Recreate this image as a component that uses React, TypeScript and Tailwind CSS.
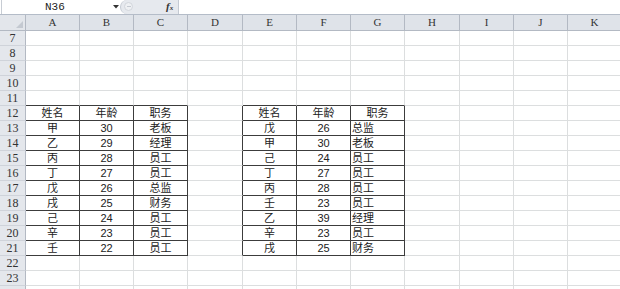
import React from "react";

const COLS = ["A", "B", "C", "D", "E", "F", "G", "H", "I", "J", "K"];
const ROWS = Array.from({ length: 18 }, (_, i) => i + 7);

const left: string[][] = [
  ["姓名", "年龄", "职务"],
  ["甲", "30", "老板"],
  ["乙", "29", "经理"],
  ["丙", "28", "员工"],
  ["丁", "27", "员工"],
  ["戊", "26", "总监"],
  ["戌", "25", "财务"],
  ["己", "24", "员工"],
  ["辛", "23", "员工"],
  ["壬", "22", "员工"],
];

const right: string[][] = [
  ["姓名", "年龄", "职务"],
  ["戊", "26", "总监"],
  ["甲", "30", "老板"],
  ["己", "24", "员工"],
  ["丁", "27", "员工"],
  ["丙", "28", "员工"],
  ["壬", "23", "员工"],
  ["乙", "39", "经理"],
  ["辛", "23", "员工"],
  ["戌", "25", "财务"],
];

function cellText(r: number, c: number): { text: string; align: "center" | "left" } {
  if (r >= 12 && r <= 21) {
    const i = r - 12;
    if (c <= 2) return { text: left[i][c], align: "center" };
    if (c >= 4 && c <= 6) {
      const t = right[i][c - 4];
      const align = c === 6 && r !== 12 ? "left" : "center";
      return { text: t, align };
    }
  }
  return { text: "", align: "center" };
}

export default function App() {
  return (
    <div
      className="w-[620px] h-[289px] overflow-hidden bg-white text-[#222]"
      style={{ fontFamily: '"Liberation Sans", "Noto Sans CJK SC", sans-serif' }}
    >
      {/* formula bar */}
      <div className="flex h-[15px] border-b border-[#b4bcc8] bg-white">
        <div className="w-[2px] h-[14px] border-l border-[#c8cdd4] ml-[1px]" />
        <div className="w-[117px] h-[14px] flex items-center relative">
          <span
            className="absolute left-[42px] top-[0px] text-[11px] leading-[14px] text-[#222]"
            style={{ fontFamily: '"Liberation Mono", monospace' }}
          >
            N36
          </span>
          <svg className="absolute left-[110px] top-[5px]" width="6" height="4" viewBox="0 0 6 4">
            <path d="M0 0 L6 0 L3 3.5 Z" fill="#333" />
          </svg>
        </div>
        <div className="w-[59px] h-[14px] bg-[#e6e9ee] rounded-l-[7px] border-l border-r border-[#c4cad3] relative">
          <div className="absolute left-[3px] top-[2px] w-[9px] h-[9px] rounded-full border border-[#d2d6dc] bg-[#eef0f3] flex items-center justify-center">
            <div className="w-[4px] h-[1px] bg-[#c4c9d1]" />
          </div>
          <span
            className="absolute left-[45px] top-[0px] text-[11px] leading-[13px] italic font-bold text-[#333]"
            style={{ fontFamily: '"Liberation Serif", serif' }}
          >
            f<span className="text-[7px]">x</span>
          </span>
        </div>
        <div className="flex-1" />
      </div>

      {/* grid */}
      <div className="grid grid-cols-[26px_54px_54px_54px_55px_54px_54px_54px_55px_54px_54px_54px] grid-rows-[16px_repeat(18,15px)]">
        {/* header row */}
        <div className="bg-[#e3e6eb] border-r border-b border-[#b3b9c3] relative">
          <svg className="absolute right-[2px] bottom-[2px]" width="7" height="7" viewBox="0 0 7 7">
            <path d="M7 0 L7 7 L0 7 Z" fill="#c4c9d1" />
          </svg>
        </div>
        {COLS.map((c) => (
          <div
            key={c}
            className="bg-[#dfe3e9] border-r border-b border-[#b3b9c3] flex items-center justify-center text-[11px] leading-none text-[#333]"
            style={{ fontFamily: '"Liberation Serif", serif' }}
          >
            {c}
          </div>
        ))}

        {ROWS.map((r) => (
          <React.Fragment key={r}>
            <div
              className="bg-[#e4e7ec] border-r border-b border-r-[#b3b9c3] border-b-[#cfd3da] flex items-center justify-center text-[12px] leading-none text-[#333]"
              style={{ fontFamily: '"Liberation Serif", serif' }}
            >
              {r <= 23 ? r : ""}
            </div>
            {COLS.map((_, c) => {
              const darkR = r >= 12 && r <= 21 && c <= 6;
              const darkB = r >= 11 && r <= 21 && (c <= 2 || (c >= 4 && c <= 6));
              const { text, align } = cellText(r, c);
              return (
                <div
                  key={c}
                  className={
                    "border-r border-b flex items-center text-[11px] leading-none overflow-hidden whitespace-nowrap " +
                    (darkR ? "border-r-[#3c3c3c] " : "border-r-[#dcdedf] ") +
                    (darkB ? "border-b-[#3c3c3c] " : "border-b-[#dcdedf] ") +
                    (align === "left" ? "justify-start pl-[1px]" : "justify-center")
                  }
                >
                  {text}
                </div>
              );
            })}
          </React.Fragment>
        ))}
      </div>
    </div>
  );
}
